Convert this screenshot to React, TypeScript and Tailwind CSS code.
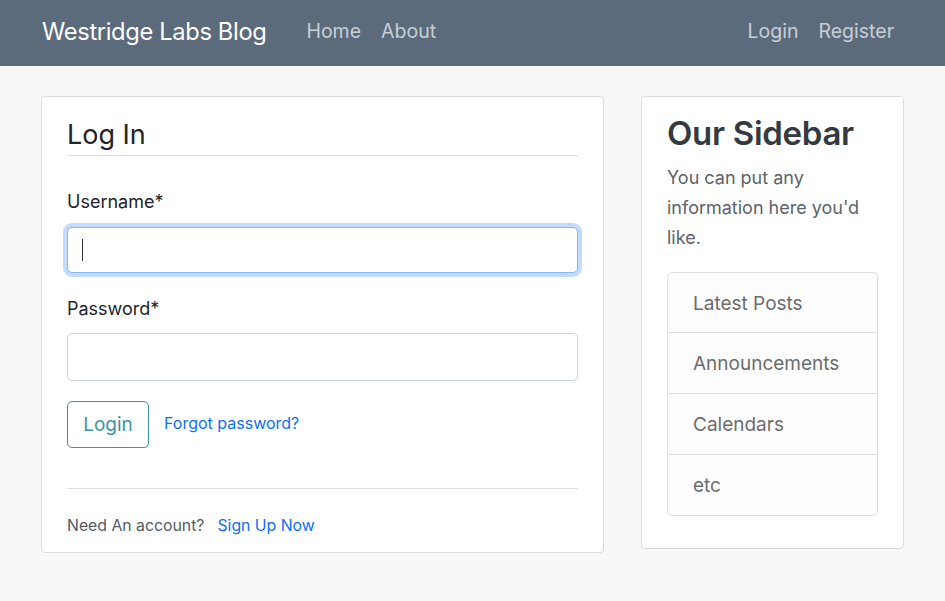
import React from "react";

export default function App() {
  const font = { fontFamily: "Inter, 'Noto Sans', sans-serif" };
  return (
    <div className="min-h-[601px] w-full bg-[#f8f8f8]" style={font}>
      <nav className="h-[66px] bg-[#5b6b7c] flex items-center px-[42px] pb-[3px]">
        <span className="text-white text-[23.7px] tracking-[-0.35px] leading-none">Westridge Labs Blog</span>
        <div className="flex items-center gap-[20px] ml-[40px] text-[19.5px] text-[#c7ced6] leading-none">
          <span>Home</span>
          <span>About</span>
        </div>
        <div className="flex items-center gap-[20px] ml-auto mr-[9px] text-[19.5px] text-[#c7ced6] leading-none">
          <span>Login</span>
          <span>Register</span>
        </div>
      </nav>

      <main className="flex items-start gap-[37px] pl-[41px] pt-[30px]">
        <section className="w-[563px] bg-white border border-[#dcdcdc] rounded-[4px] px-[25px] pt-[20px] pb-[14px]">
          <h2 className="text-[27px] text-[#212529] leading-[36px] pb-[2px] border-b border-[#dedede]">Log In</h2>
          <div className="mt-[32px]">
            <label className="block text-[18px] text-[#212529] leading-[28px]">Username*</label>
            <div className="relative mt-[11px]">
              <input className="block w-full h-[46px] rounded-[5px] border border-[#86b7fe] shadow-[0_0_0_4px_rgba(13,110,253,0.25)] outline-none px-[14px] bg-white" />
              <span className="absolute left-[15px] top-[12px] w-px h-[22px] bg-[#333]" />
            </div>
          </div>
          <div className="mt-[22px]">
            <label className="block text-[18px] text-[#212529] leading-[28px]">Password*</label>
            <input type="password" className="block w-full mt-[10px] h-[48px] rounded-[5px] border border-[#ced4da] outline-none px-[14px] bg-white" />
          </div>
          <div className="flex items-center mt-[20px] gap-[15px]">
            <button className="h-[47px] w-[82px] rounded-[5px] border border-[#3c95a6] text-[#3c95a6] text-[19px] bg-white pt-[2px]">Login</button>
            <span className="text-[16px] text-[#0d6efd] mb-[3px]">Forgot password?</span>
          </div>
          <div className="mt-[40px] border-t border-[#dedede] pt-[25px] flex items-center gap-[13px] text-[15.8px] leading-[24px]">
            <span className="text-[#555b61]">Need An account?</span>
            <span className="text-[#0d6efd]">Sign Up Now</span>
          </div>
        </section>

        <aside className="w-[263px] bg-white border border-[#dcdcdc] rounded-[4px] px-[25px] pt-[14px] pb-[32px]">
          <h1 className="text-[33px] font-semibold text-[#343a40] leading-[44px] tracking-[-0.3px]">Our Sidebar</h1>
          <p className="mt-[8px] text-[18px] leading-[30px] text-[#5c636a]">You can put any information here you'd like.</p>
          <ul className="mt-[19px] border border-[#dedede] rounded-[5px] bg-[#fdfdfd] text-[19px] text-[#6c6c6c]">
            <li className="h-[60px] flex items-center px-[25px] pt-[3px] border-b border-[#dedede]">Latest Posts</li>
            <li className="h-[61px] flex items-center px-[25px] pt-[3px] border-b border-[#dedede]">Announcements</li>
            <li className="h-[61px] flex items-center px-[25px] pt-[3px] border-b border-[#dedede]">Calendars</li>
            <li className="h-[60px] flex items-center px-[25px] pt-[3px]">etc</li>
          </ul>
        </aside>
      </main>
    </div>
  );
}
